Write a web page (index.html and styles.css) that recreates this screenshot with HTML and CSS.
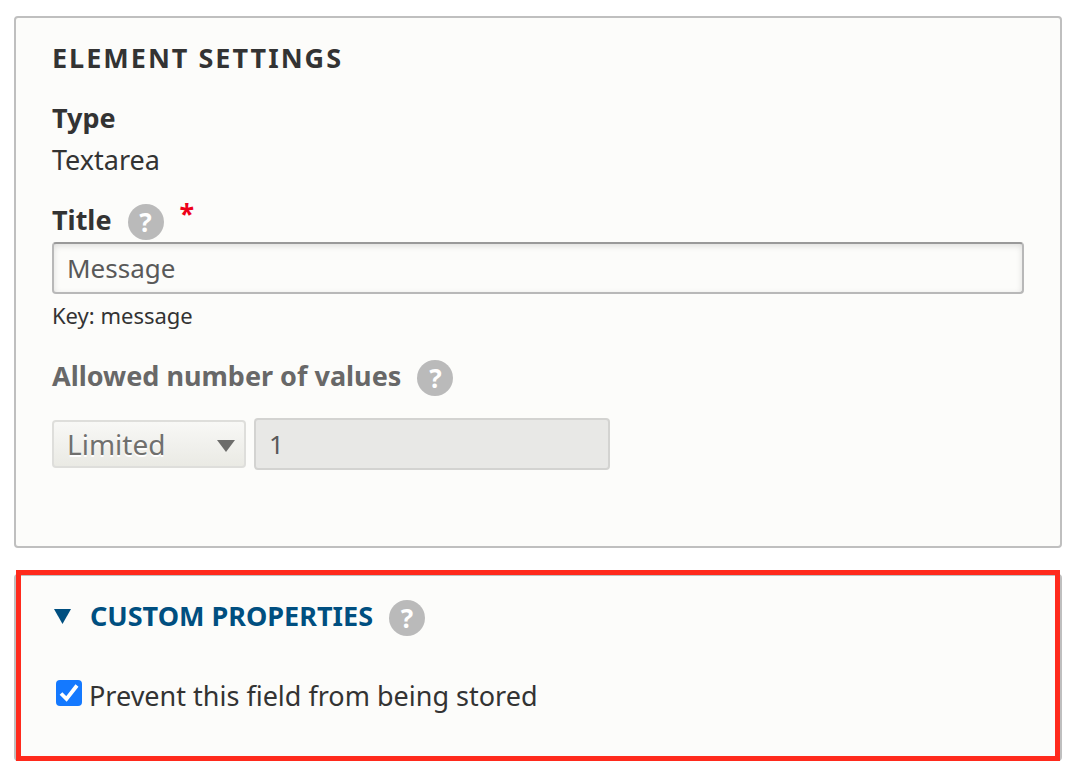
FILE: index.html
```html
<!DOCTYPE html>
<html lang="en">
<head>
<meta charset="utf-8">
<title>Element settings</title>
<link rel="stylesheet" href="styles.css">
</head>
<body>
<form class="page">
  <section class="panel">
    <h2 class="panel-title">Element settings</h2>
    <div class="item">
      <div class="label">Type</div>
      <div class="value">Textarea</div>
    </div>
    <div class="label-row">
      <label class="label" for="title">Title</label>
      <button type="button" class="help" aria-label="Help: title">?</button>
      <span class="required">*</span>
    </div>
    <input class="field" id="title" type="text" value="Message" required>
    <p class="description">Key: message</p>
    <div class="label-row muted">
      <label class="label" for="limit">Allowed number of values</label>
      <button type="button" class="help" aria-label="Help: allowed number of values">?</button>
    </div>
    <div class="controls">
      <div class="select-wrap">
        <select class="select" id="limit" disabled><option>Limited</option></select>
        <svg class="select-arrow" width="18" height="12" viewBox="0 0 18 12" aria-hidden="true"><path d="M0 0H18L9 12Z" fill="#6d6d6b"/></svg>
      </div>
      <input class="field field-disabled" type="text" value="1" aria-label="Number of values" disabled>
    </div>
  </section>

  <section class="panel panel-custom">
    <div class="label-row">
      <button type="button" class="summary" aria-expanded="true">
        <svg width="17" height="15" viewBox="0 0 17 15" aria-hidden="true"><path d="M0 0H17L8.500 15Z" fill="#004f80"/></svg>
        <span>Custom properties</span>
      </button>
      <button type="button" class="help" aria-label="Help: custom properties">?</button>
    </div>
    <div class="check-row">
      <span class="check-wrap">
        <input class="check" id="prevent" type="checkbox" checked>
        <svg class="check-mark" viewBox="0 0 26 26" aria-hidden="true"><path d="M5 13.500L10.500 19L21 5.500" fill="none" stroke="#fff" stroke-width="3.800"/></svg>
      </span>
      <label class="value" for="prevent">Prevent this field from being stored</label>
    </div>
    <div class="highlight"></div>
  </section>
</form>
</body>
</html>
```
FILE: styles.css
```css
* { box-sizing: border-box; }
body {
  margin: 0;
  background: #fff;
  color: #333;
  font: 27px/32px "Lucida Grande", "Noto Sans", "Open Sans", sans-serif;
}
input, select, button { font: inherit; color: inherit; margin: 0; }
.page { padding: 16px 12px 16px 14px; }
.panel {
  position: relative;
  padding: 24px 36px 76px;
  border: 2px solid #bfbfbf;
  border-radius: 4px;
  background: #fcfcfa;
}
.panel-title {
  margin: 0 0 28px;
  font-size: 27px;
  font-weight: 700;
  letter-spacing: 2px;
  text-transform: uppercase;
}
.item { display: grid; gap: 10px; margin-bottom: 28px; }
.label { font-weight: 700; }
.label-row { display: flex; align-items: flex-start; gap: 16px; }
.help {
  width: 36px;
  height: 36px;
  padding: 0;
  border: 0;
  border-radius: 50%;
  background: #bababa;
  color: #fff;
  font-size: 26px;
  font-weight: 700;
  line-height: 32px;
  text-align: center;
}
.required { color: #ee0019; font-weight: 700; line-height: 20px; }
.field {
  display: block;
  width: 100%;
  height: 52px;
  margin-top: 2px;
  padding: 0 13px;
  border: 2px solid #b8b8b8;
  border-top-color: #999;
  border-radius: 4px;
  background: #fcfcfa;
  box-shadow: inset 0 2px 6px #00000020;
  color: #595959;
  font-size: 26px;
}
.description { margin: 5px 0 29px; font-size: 22px; }
.muted { color: #686868; }
.controls { display: flex; align-items: center; gap: 8px; margin-top: 22px; }
.select-wrap { position: relative; }
.select {
  display: block;
  appearance: none;
  width: 194px;
  height: 48px;
  padding: 0 13px;
  border: 2px solid #dededb;
  border-radius: 4px;
  background: linear-gradient(#f8f8f6, #eaeae4);
  color: #70706e;
  font-size: 28px;
  opacity: 1;
  text-shadow: 0 2px #fff;
}
.select-arrow { position: absolute; right: 11px; top: 20px; pointer-events: none; }
.field-disabled {
  width: 356px;
  margin: 0;
  border-color: #d3d3d1;
  background: #e8e8e6;
  box-shadow: none;
}
.panel-custom { margin-top: 26px; padding-bottom: 45px; }
.summary {
  display: flex;
  align-items: center;
  gap: 19px;
  padding: 0 0 0 2px;
  border: 0;
  background: none;
  color: #004f80;
  font-weight: 700;
  text-transform: uppercase;
}
.check-row { display: flex; align-items: center; gap: 7px; margin-top: 44px; padding: 0 0 2px 4px; }
.check-wrap { position: relative; width: 26px; height: 32px; }
.check {
  display: block;
  appearance: none;
  width: 26px;
  height: 26px;
  border-radius: 4px;
  background: #1479ff;
}
.check-mark { position: absolute; top: 0; left: 0; width: 26px; height: 26px; pointer-events: none; }
.check:not(:checked) + .check-mark { display: none; }
.highlight {
  position: absolute;
  inset: -6px 0 -2px 0;
  border: 5px solid #ff2a1c;
  pointer-events: none;
}
```
